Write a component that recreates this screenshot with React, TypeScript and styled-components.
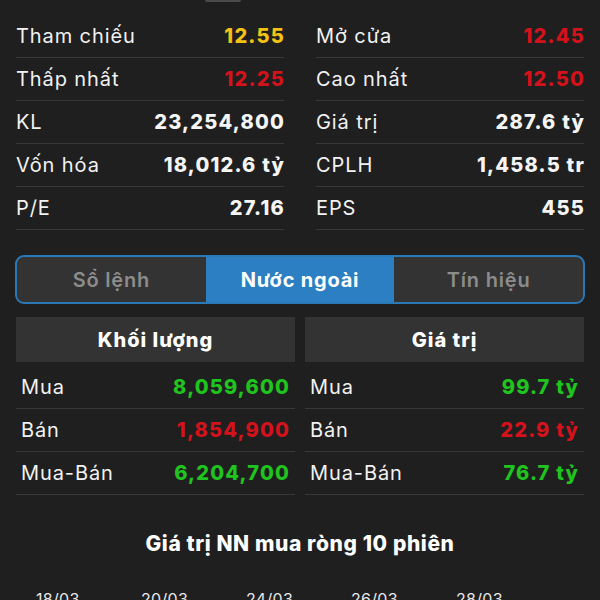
import styled, { createGlobalStyle } from 'styled-components';

const GlobalStyle = createGlobalStyle`
	html, body {
		margin: 0;
		padding: 0;
		background: #1f1f1f;
	}
	body {
		font-family: Inter, "Liberation Sans", sans-serif;
		color: #f2f2f2;
		-webkit-font-smoothing: antialiased;
	}
`;

const Page = styled.div`
	width: 600px;
	height: 600px;
	overflow: hidden;
	background: #1f1f1f;
	padding: 0 16px;
	box-sizing: border-box;
	position: relative;
`;

const Handle = styled.div`
	position: absolute;
	top: 0;
	left: 205px;
	width: 36px;
	height: 2px;
	border-radius: 0 0 2px 2px;
	background: #4a4a4a;
`;

const StatsGrid = styled.div`
	display: grid;
	grid-template-columns: 1fr 1fr;
	column-gap: 32px;
	padding-top: 15px;
`;

const StatsColumn = styled.div`
	display: flex;
	flex-direction: column;
`;

const StatRow = styled.div`
	height: 43px;
	display: flex;
	align-items: center;
	justify-content: space-between;
	border-bottom: 1px solid #383838;
	box-sizing: border-box;
	font-size: 20px;
`;

const Label = styled.span`
	color: #f2f2f2;
	font-weight: 400;
	letter-spacing: 0.9px;
`;

const Value = styled.span<{ $color?: string }>`
	color: ${(p) => p.$color || '#f5f5f5'};
	font-weight: 800;
	letter-spacing: 1.2px;
	margin-right: -1px;
`;

const Tabs = styled.div`
	margin: 25px -1px 0;
	height: 49px;
	display: grid;
	grid-template-columns: 1fr 1fr 1fr;
	border: 2px solid #2a78b6;
	border-radius: 9px;
	overflow: hidden;
	box-sizing: border-box;
	background: #333333;
`;

const Tab = styled.div<{ $active?: boolean }>`
	display: flex;
	align-items: center;
	justify-content: center;
	font-size: 20px;
	letter-spacing: 0.8px;
	font-weight: ${(p) => (p.$active ? 700 : 600)};
	color: ${(p) => (p.$active ? '#ffffff' : '#8c8c8c')};
	background: ${(p) => (p.$active ? '#2b7fc2' : 'transparent')};
`;

const Tables = styled.div`
	margin-top: 13px;
	display: grid;
	grid-template-columns: 1fr 1fr;
	column-gap: 10px;
`;

const Table = styled.div`
	display: flex;
	flex-direction: column;
`;

const TableHead = styled.div`
	height: 45px;
	display: flex;
	align-items: center;
	justify-content: center;
	background: #333333;
	font-size: 20px;
	font-weight: 800;
	letter-spacing: 1px;
	color: #ffffff;
	margin-bottom: 4px;
`;

const TableRow = styled(StatRow)`
	padding: 0 6px 0 5px;
`;

const ChartTitle = styled.div`
	margin-top: 37px;
	text-align: center;
	font-size: 21px;
	line-height: 24px;
	font-weight: 800;
	letter-spacing: 0.6px;
	color: #ffffff;
`;

const Dates = styled.div`
	margin-top: 33px;
	display: grid;
	grid-template-columns: repeat(5, 105px);
	padding-left: 20px;
	font-size: 16px;
	letter-spacing: 0.3px;
	color: #e8e8e8;
`;

const GREEN = '#1fc41f';
const RED = '#d4121c';
const YELLOW = '#f2c314';

const leftStats = [
	{ label: 'Tham chiếu', value: '12.55', color: YELLOW },
	{ label: 'Thấp nhất', value: '12.25', color: RED },
	{ label: 'KL', value: '23,254,800' },
	{ label: 'Vốn hóa', value: '18,012.6 tỷ' },
	{ label: 'P/E', value: '27.16' },
];

const rightStats = [
	{ label: 'Mở cửa', value: '12.45', color: RED },
	{ label: 'Cao nhất', value: '12.50', color: RED },
	{ label: 'Giá trị', value: '287.6 tỷ' },
	{ label: 'CPLH', value: '1,458.5 tr' },
	{ label: 'EPS', value: '455' },
];

const volume = [
	{ label: 'Mua', value: '8,059,600', color: GREEN },
	{ label: 'Bán', value: '1,854,900', color: RED },
	{ label: 'Mua-Bán', value: '6,204,700', color: GREEN },
];

const amount = [
	{ label: 'Mua', value: '99.7 tỷ', color: GREEN },
	{ label: 'Bán', value: '22.9 tỷ', color: RED },
	{ label: 'Mua-Bán', value: '76.7 tỷ', color: GREEN },
];

const dates = ['18/03', '20/03', '24/03', '26/03', '28/03'];

function App() {
	return (
		<Page>
			<GlobalStyle />
			<Handle />
			<StatsGrid>
				<StatsColumn>
					{leftStats.map((s) => (
						<StatRow key={s.label}>
							<Label>{s.label}</Label>
							<Value $color={s.color}>{s.value}</Value>
						</StatRow>
					))}
				</StatsColumn>
				<StatsColumn>
					{rightStats.map((s) => (
						<StatRow key={s.label}>
							<Label>{s.label}</Label>
							<Value $color={s.color}>{s.value}</Value>
						</StatRow>
					))}
				</StatsColumn>
			</StatsGrid>

			<Tabs>
				<Tab>Sổ lệnh</Tab>
				<Tab $active>Nước ngoài</Tab>
				<Tab>Tín hiệu</Tab>
			</Tabs>

			<Tables>
				<Table>
					<TableHead>Khối lượng</TableHead>
					{volume.map((r) => (
						<TableRow key={r.label}>
							<Label>{r.label}</Label>
							<Value $color={r.color}>{r.value}</Value>
						</TableRow>
					))}
				</Table>
				<Table>
					<TableHead>Giá trị</TableHead>
					{amount.map((r) => (
						<TableRow key={r.label}>
							<Label>{r.label}</Label>
							<Value $color={r.color}>{r.value}</Value>
						</TableRow>
					))}
				</Table>
			</Tables>

			<ChartTitle>Giá trị NN mua ròng 10 phiên</ChartTitle>
			<Dates>
				{dates.map((d) => (
					<span key={d}>{d}</span>
				))}
			</Dates>
		</Page>
	);
}

export default App;
